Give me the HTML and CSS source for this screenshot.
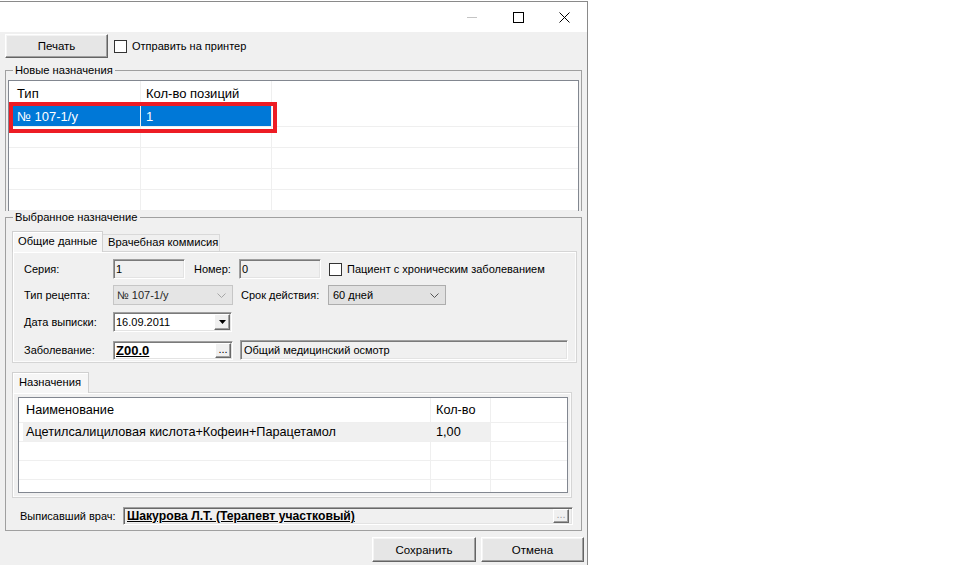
FILE: index.html
```html
<!DOCTYPE html>
<html lang="ru">
<head>
    <meta charset="UTF-8">
    <title>Рецепт</title>
    <link rel="stylesheet" href="styles.css">
</head>
<body>
<div class="window">
    <div class="titlebar">
        <span class="caption-btn">
            <svg width="10" height="1" viewBox="0 0 10 1"><rect width="10" height="1" fill="#c4c4c4"/></svg>
        </span>
        <span class="caption-btn">
            <svg width="11" height="11" viewBox="0 0 11 11"><rect x="0.5" y="0.5" width="10" height="10" fill="none" stroke="#000"/></svg>
        </span>
        <span class="caption-btn">
            <svg width="11" height="11" viewBox="0 0 11 11"><path d="M0.5 0.5L10.5 10.5M10.5 0.5L0.5 10.5" stroke="#000" fill="none"/></svg>
        </span>
    </div>

    <div class="client">
        <div class="toolbar">
            <button class="btn print-btn">Печать</button>
            <span class="checkbox"></span>
            <span class="check-label">Отправить на принтер</span>
        </div>

        <!-- Новые назначения -->
        <div class="group group-new">
            <div class="group-title">Новые назначения</div>
            <div class="list list-new">
                <table class="grid">
                    <thead>
                        <tr>
                            <th class="c1">Тип</th>
                            <th class="c2">Кол-во позиций</th>
                            <th></th>
                        </tr>
                    </thead>
                    <tbody>
                        <tr class="selected">
                            <td class="c1">№ 107-1/у</td>
                            <td class="c2">1</td>
                            <td></td>
                        </tr>
                        <tr><td class="c1"></td><td class="c2"></td><td></td></tr>
                        <tr><td class="c1"></td><td class="c2"></td><td></td></tr>
                        <tr><td class="c1"></td><td class="c2"></td><td></td></tr>
                        <tr><td class="c1"></td><td class="c2"></td><td></td></tr>
                    </tbody>
                </table>
            </div>
            <div class="highlight"></div>
        </div>

        <!-- Выбранное назначение -->
        <div class="group group-selected">
            <div class="group-title">Выбранное назначение</div>

            <div class="tabs">
                <span class="tab active tab-general">Общие данные</span>
                <span class="tab tab-commission">Врачебная коммисия</span>
            </div>
            <div class="tab-panel panel-general">
                <div class="form-row">
                    <span class="lbl lbl-first">Серия:</span>
                    <span class="field sunken readonly f-series">1</span>
                    <span class="lbl lbl-number">Номер:</span>
                    <span class="field sunken readonly f-number">0</span>
                    <span class="checkbox cb-chronic"></span>
                    <span class="check-label">Пациент с хроническим заболеванием</span>
                </div>
                <div class="form-row row-2">
                    <span class="lbl lbl-first">Тип рецепта:</span>
                    <span class="combo disabled f-type">
                        <span class="combo-text">№ 107-1/у</span>
                        <svg width="9" height="5" viewBox="0 0 9 5"><path d="M0.5 0.5L4.5 4.5L8.5 0.5" stroke="#a6a6a6" fill="none"/></svg>
                    </span>
                    <span class="lbl lbl-term">Срок действия:</span>
                    <span class="combo f-term">
                        <span class="combo-text">60 дней</span>
                        <svg width="9" height="5" viewBox="0 0 9 5"><path d="M0.5 0.5L4.5 4.5L8.5 0.5" stroke="#555" fill="none"/></svg>
                    </span>
                </div>
                <div class="form-row row-3">
                    <span class="lbl lbl-first">Дата выписки:</span>
                    <span class="field sunken f-date">
                        <span class="field-text">16.09.2011</span>
                        <span class="mini-btn">
                            <svg width="7" height="4" viewBox="0 0 7 4"><path d="M0 0H7L3.5 4Z" fill="#000"/></svg>
                        </span>
                    </span>
                </div>
                <div class="form-row row-4">
                    <span class="lbl lbl-first">Заболевание:</span>
                    <span class="field sunken f-diag">
                        <span class="field-text code">Z00.0</span>
                        <span class="mini-btn dots">...</span>
                    </span>
                    <span class="field sunken readonly f-diag-name">Общий медицинский осмотр</span>
                </div>
            </div>

            <div class="tabs tabs-items">
                <span class="tab active tab-items">Назначения</span>
            </div>
            <div class="tab-panel panel-items">
                <div class="list list-items">
                    <table class="grid">
                        <thead>
                            <tr>
                                <th class="n1">Наименование</th>
                                <th class="n2">Кол-во</th>
                                <th></th>
                            </tr>
                        </thead>
                        <tbody>
                            <tr class="filled">
                                <td class="n1">Ацетилсалициловая кислота+Кофеин+Парацетамол</td>
                                <td class="n2">1,00</td>
                                <td></td>
                            </tr>
                            <tr><td class="n1"></td><td class="n2"></td><td></td></tr>
                            <tr><td class="n1"></td><td class="n2"></td><td></td></tr>
                            <tr><td class="n1"></td><td class="n2"></td><td></td></tr>
                        </tbody>
                    </table>
                </div>
            </div>

            <div class="doctor-row">
                <span class="lbl lbl-doctor">Выписавший врач:</span>
                <span class="field deep f-doctor">
                    <span class="field-text code">Шакурова Л.Т. (Терапевт участковый)</span>
                    <span class="mini-btn dots disabled-btn">...</span>
                </span>
            </div>
        </div>

        <div class="footer">
            <button class="btn save-btn">Сохранить</button>
            <button class="btn cancel-btn">Отмена</button>
        </div>
    </div>
</div>
</body>
</html>
```

FILE: styles.css
```css
* {
    box-sizing: border-box;
    margin: 0;
    padding: 0;
}

body {
    background-color: #fff;
    font-family: "Liberation Sans", Arial, sans-serif;
    font-size: 11px;
    color: #000;
}

.window {
    width: 588px;
    height: 564px;
    margin-top: 1px;
    border-top: 1px solid #8a8a8a;
    border-right: 1px solid #8a8a8a;
    background-color: #f0f0f0;
    display: flex;
    flex-direction: column;
    overflow: hidden;
}

.titlebar {
    height: 30px;
    flex: none;
    background-color: #fff;
    display: flex;
    justify-content: flex-end;
}

.caption-btn {
    width: 46px;
    display: flex;
    align-items: center;
    justify-content: center;
}

.client {
    flex: 1;
    padding: 2px 3px 0 5px;
}

/* buttons */
.btn {
    font-family: inherit;
    font-size: 11.5px;
    color: #000;
    background-color: #e6e6e6;
    border: 1px solid;
    border-color: #fff #646464 #646464 #fff;
    box-shadow: inset -1px -1px 0 #a0a0a0, inset 1px 1px 0 #f4f4f4;
}

.toolbar {
    height: 24px;
    display: flex;
    align-items: center;
}

.print-btn {
    width: 103px;
    height: 24px;
}

.checkbox {
    width: 13px;
    height: 13px;
    flex: none;
    background-color: #fff;
    border: 1px solid #333;
}

.toolbar .checkbox {
    margin-left: 6px;
}

.check-label {
    margin-left: 5px;
    white-space: nowrap;
}

/* group boxes */
.group {
    width: 577px;
    border: 1px solid #a0a0a0;
    position: relative;
}

.group-title {
    width: fit-content;
    height: 13px;
    line-height: 13px;
    margin-top: -7px;
    padding: 0 2px;
    background-color: #f0f0f0;
    white-space: nowrap;
    font-size: 11.2px;
}

.group-new {
    margin-top: 12px;
    border-bottom: none;
    padding: 0 2px;
}

.group-new .group-title {
    margin-left: 5px;
}

.group-selected {
    margin-top: 6px;
    padding: 0 4px 5px 6px;
}

.group-selected .group-title {
    margin-left: 1px;
}

/* list views */
.list {
    background-color: #fff;
    border: 1px solid #828790;
    overflow: hidden;
}

.list-new {
    margin-top: 3px;
    height: 131px;
    border-bottom: none;
}

.grid {
    width: 100%;
    table-layout: fixed;
    border-collapse: separate;
    border-spacing: 0;
    font-size: 13px;
}

.grid th,
.grid td {
    text-align: left;
    font-weight: normal;
    white-space: nowrap;
    overflow: hidden;
    border-right: 1px solid #efefef;
    border-bottom: 1px solid #efefef;
}

.grid th:last-child,
.grid td:last-child {
    border-right: none;
}

.list-new th {
    height: 25px;
    border-bottom: none;
}

.list-new td {
    height: 21px;
}

.list-new .c1 {
    width: 132px;
    padding-left: 8px;
}

.list-new .c2 {
    width: 131px;
    padding-left: 5px;
}

.selected .c1,
.selected .c2 {
    background-color: #0078d7;
    color: #fff;
}

/* red annotation frame over the selected row */
.highlight {
    position: absolute;
    left: 3px;
    top: 31px;
    width: 268px;
    height: 31px;
    border: 4px solid #ed1c24;
}

/* tabs */
.tabs {
    height: 20px;
    display: flex;
    align-items: flex-end;
    margin-top: 7px;
}

.tab {
    height: 17px;
    line-height: 15px;
    font-size: 11.2px;
    border: 1px solid #d9d9d9;
    border-bottom: none;
    background-color: #f0f0f0;
    white-space: nowrap;
}

.tab.active {
    height: 21px;
    line-height: 19px;
    margin-bottom: -1px;
    position: relative;
    z-index: 1;
    background-color: #f6f6f6;
    border-color: #d0d0d0;
    box-shadow: inset 1px 1px 0 #fff;
}

.tab-general {
    width: 91px;
    padding-left: 5px;
}

.tab-commission {
    width: 118px;
    margin-left: -1px;
    padding-left: 5px;
}

.tab-panel {
    border: 1px solid #d5d5d5;
    box-shadow: inset 1px 1px 0 #fff, inset -1px -1px 0 #fbfbfb;
}

.panel-general {
    width: 565px;
    height: 112px;
    padding: 7px 0 0 11px;
}

.tabs-items {
    margin-top: 9px;
}

.tab-items {
    width: 77px;
    padding-left: 6px;
}

.panel-items {
    width: 560px;
    height: 106px;
    padding: 4px 0 0 5px;
}

/* form rows */
.form-row {
    height: 20px;
    display: flex;
    align-items: center;
}

.row-2 {
    margin-top: 6px;
}

.row-3 {
    margin-top: 7px;
}

.row-4 {
    margin-top: 8px;
}

.lbl {
    flex: none;
    white-space: nowrap;
}

.lbl-first {
    width: 89px;
}

.lbl-number {
    width: 45px;
    margin-left: 9px;
}

.lbl-term {
    width: 87px;
    margin-left: 8px;
}

.field {
    height: 20px;
    flex: none;
    display: flex;
    align-items: center;
    background-color: #fff;
    padding-left: 2px;
    white-space: nowrap;
    overflow: hidden;
}

.sunken {
    border: 1px solid;
    border-color: #a0a0a0 #fff #fff #a0a0a0;
    box-shadow: inset 1px 1px 0 #7a7a7a, inset -1px -1px 0 #e3e3e3;
}

.readonly {
    background-color: #f0f0f0;
}

.f-series {
    width: 72px;
}

.f-number {
    width: 82px;
}

.cb-chronic {
    margin-left: 8px;
}

.combo {
    height: 20px;
    flex: none;
    display: flex;
    align-items: center;
    justify-content: space-between;
    padding: 0 6px 0 3px;
    background-color: #e1e1e1;
    border: 1px solid #adadad;
}

.combo.disabled {
    background-color: #e5e5e5;
    border-color: #c6c6c6;
    color: #262626;
}

.f-type {
    width: 120px;
}

.f-term {
    width: 118px;
    padding-left: 4px;
}

.field-text {
    flex: 1;
}

.f-date {
    width: 119px;
    padding-right: 1px;
}

.mini-btn {
    width: 16px;
    height: 16px;
    flex: none;
    display: flex;
    align-items: center;
    justify-content: center;
    background-color: #f0f0f0;
    border: 1px solid;
    border-color: #fff #696969 #696969 #fff;
    box-shadow: inset -1px -1px 0 #a0a0a0;
}

.dots {
    font-size: 11px;
    font-weight: normal;
    text-decoration: none;
    align-items: flex-end;
    padding-bottom: 2px;
}

.code {
    font-weight: bold;
    text-decoration: underline;
}

.f-diag {
    width: 120px;
    height: 19px;
    padding-right: 1px;
}

.f-diag .code {
    font-size: 13px;
}

.f-diag .mini-btn {
    height: 15px;
}

.f-diag-name {
    width: 328px;
    margin-left: 7px;
    padding-left: 3px;
}

/* grid of items */
.list-items {
    width: 550px;
    height: 96px;
}

.list-items .grid {
    font-size: 12.7px;
}

.list-items th {
    height: 25px;
}

.list-items td {
    height: 19px;
}

.list-items .n1 {
    width: 412px;
    padding-left: 7px;
}

.list-items .n2 {
    width: 60px;
    padding-left: 5px;
}

.filled .n1 {
    background: linear-gradient(to right, #fff 4px, #f0f0f0 4px);
}

.filled .n2 {
    background-color: #f0f0f0;
}

/* doctor */
.doctor-row {
    margin-top: 9px;
    height: 18px;
    display: flex;
    align-items: center;
    padding-left: 8px;
}

.lbl-doctor {
    width: 103px;
}

.deep {
    border: 1px solid;
    border-color: #a0a0a0 #fff #fff #a0a0a0;
    box-shadow: inset 1px 1px 0 #696969, inset -1px -1px 0 #e3e3e3;
}

.f-doctor {
    width: 450px;
    height: 18px;
    padding: 0 3px 0 3px;
    background-color: #f0f0f0;
}

.f-doctor .code {
    font-size: 12.2px;
}

.f-doctor .mini-btn {
    width: 16px;
    height: 14px;
}

.disabled-btn {
    color: #a0a0a0;
}

/* footer */
.footer {
    margin-top: 6px;
    display: flex;
    justify-content: flex-end;
    gap: 5px;
}

.save-btn {
    width: 104px;
    height: 25px;
}

.cancel-btn {
    width: 103px;
    height: 25px;
}
```
